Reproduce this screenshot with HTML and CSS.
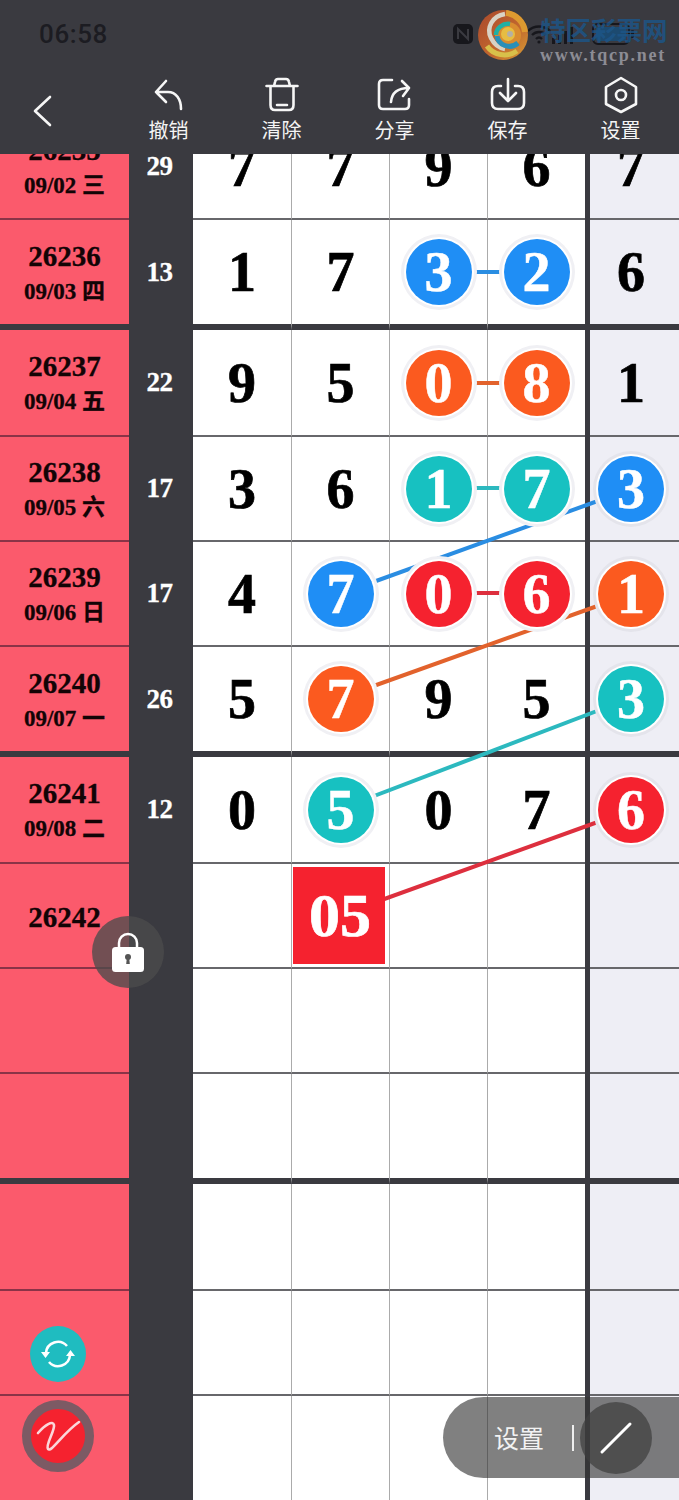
FILE: index.html
```html
<!DOCTYPE html>
<html lang="zh">
<head>
<meta charset="utf-8">
<title>走势图</title>
<link rel="stylesheet" href="styles.css">
</head>
<body>
<div class="app">
  <header class="head">
    <div class="status">
      <span class="time">06:58</span>
      <div class="status-icons">
        <svg class="si-nfc" viewBox="0 0 20 20"><rect x="0" y="0" width="20" height="20" rx="5" fill="#17171c"/><path d="M5 15V5l10 10V5" fill="none" stroke="#3a3a40" stroke-width="2"/></svg>
        <svg class="si-wifi" viewBox="0 0 24 20"><g fill="none" stroke="#17171c" stroke-width="2.4"><path d="M1 7c6-6 16-6 22 0"/><path d="M5 11c4-4 10-4 14 0"/><path d="M9 15c2-2 4-2 6 0"/></g><circle cx="12" cy="18" r="1.6" fill="#17171c"/></svg>
        <svg class="si-signal" viewBox="0 0 26 20"><g fill="#17171c"><rect x="0" y="14" width="3" height="6"/><rect x="6" y="11" width="3" height="9"/><rect x="12" y="7" width="3" height="13"/><rect x="18" y="3" width="3" height="17"/></g></svg>
        <svg class="si-batt" viewBox="0 0 42 22"><rect x="1" y="1" width="36" height="20" rx="5" fill="none" stroke="#17171c" stroke-width="2"/><rect x="4" y="4" width="30" height="14" rx="2" fill="#1c4a70"/><rect x="39" y="7" width="3" height="8" rx="1" fill="#17171c"/></svg>
      </div>
    </div>
    <nav class="toolbar">
      <a class="back"><svg class="ico" viewBox="0 0 30 40"><path d="M22 6L7 20l15 14"/></svg></a>
      <a class="tool"><svg class="ico" viewBox="0 0 40 40"><path d="M17 7L7 18l10 10M7 18h12c8 0 13 7 13 17"/></svg><span>撤销</span></a>
      <a class="tool"><svg class="ico" viewBox="0 0 40 40"><path d="M4.500 12h31M12 12l1-4q.5-3 3-3h8q2.500 0 3 3l1 4M8.500 12v19q0 5 4.500 5h14q4.500 0 4.500-5V12M15 31h10"/></svg><span>清除</span></a>
      <a class="tool"><svg class="ico" viewBox="0 0 40 40"><path d="M17 6H8q-4 0-4 4v21q0 4 4 4h22q4 0 4-4v-6M16 28q1-14 18-14M27 7l7 7-6 8"/></svg><span>分享</span></a>
      <a class="tool"><svg class="ico" viewBox="0 0 40 40"><path d="M13 12h-3q-6 0-6 6v11q0 6 6 6h20q6 0 6-6V18q0-6-6-6h-3M20 5v21M12 19l8 8 8-8"/></svg><span>保存</span></a>
      <a class="tool"><svg class="ico" viewBox="0 0 40 40"><path d="M20 4l15 9v17l-15 8-15-8V13z"/><circle cx="20" cy="21" r="5"/></svg><span>设置</span></a>
    </nav>
  </header>

  <main class="viewport">
    <svg class="links" viewBox="0 0 679 1346">
      <g stroke-width="4" fill="none">
        <path class="lk-blue" d="M437 118H536"/>
        <path class="lk-orange" d="M437 229H536"/>
        <path class="lk-teal" d="M437 334H536"/>
        <path class="lk-red" d="M437 439H536"/>
        <path class="lk-blue" d="M340 440L631 335"/>
        <path class="lk-orange" d="M340 544L631 440"/>
        <path class="lk-teal" d="M340 655L631 544"/>
        <path class="lk-red" d="M340 761L631 656"/>
      </g>
    </svg>
    <div class="board">
      <div class="row">
        <div class="id"><b>26235</b><i>09/02 三</i></div><div class="sum">29</div>
        <div class="c">7</div><div class="c">7</div><div class="c">9</div><div class="c e">6</div><div class="bar"></div><div class="x">7</div>
      </div>
      <div class="row thick">
        <div class="id"><b>26236</b><i>09/03 四</i></div><div class="sum">13</div>
        <div class="c">1</div><div class="c">7</div><div class="c"><span class="ball blue">3</span></div><div class="c e"><span class="ball blue">2</span></div><div class="bar"></div><div class="x">6</div>
      </div>
      <div class="row lead">
        <div class="id"><b>26237</b><i>09/04 五</i></div><div class="sum">22</div>
        <div class="c">9</div><div class="c">5</div><div class="c"><span class="ball orange">0</span></div><div class="c e"><span class="ball orange">8</span></div><div class="bar"></div><div class="x">1</div>
      </div>
      <div class="row">
        <div class="id"><b>26238</b><i>09/05 六</i></div><div class="sum">17</div>
        <div class="c">3</div><div class="c">6</div><div class="c"><span class="ball teal">1</span></div><div class="c e"><span class="ball teal">7</span></div><div class="bar"></div><div class="x"><span class="ball blue">3</span></div>
      </div>
      <div class="row">
        <div class="id"><b>26239</b><i>09/06 日</i></div><div class="sum">17</div>
        <div class="c">4</div><div class="c"><span class="ball blue">7</span></div><div class="c"><span class="ball red">0</span></div><div class="c e"><span class="ball red">6</span></div><div class="bar"></div><div class="x"><span class="ball orange">1</span></div>
      </div>
      <div class="row thick">
        <div class="id"><b>26240</b><i>09/07 一</i></div><div class="sum">26</div>
        <div class="c">5</div><div class="c"><span class="ball orange">7</span></div><div class="c">9</div><div class="c e">5</div><div class="bar"></div><div class="x"><span class="ball teal">3</span></div>
      </div>
      <div class="row lead">
        <div class="id"><b>26241</b><i>09/08 二</i></div><div class="sum">12</div>
        <div class="c">0</div><div class="c"><span class="ball teal">5</span></div><div class="c">0</div><div class="c e">7</div><div class="bar"></div><div class="x"><span class="ball red">6</span></div>
      </div>
      <div class="row">
        <div class="id"><b>26242</b></div><div class="sum"></div>
        <div class="c"></div><div class="c"><span class="pick">05</span></div><div class="c"></div><div class="c e"></div><div class="bar"></div><div class="x"></div>
      </div>
      <div class="row"><div class="id"></div><div class="sum"></div><div class="c"></div><div class="c"></div><div class="c"></div><div class="c e"></div><div class="bar"></div><div class="x"></div></div>
      <div class="row thick"><div class="id"></div><div class="sum"></div><div class="c"></div><div class="c"></div><div class="c"></div><div class="c e"></div><div class="bar"></div><div class="x"></div></div>
      <div class="row lead"><div class="id"></div><div class="sum"></div><div class="c"></div><div class="c"></div><div class="c"></div><div class="c e"></div><div class="bar"></div><div class="x"></div></div>
      <div class="row"><div class="id"></div><div class="sum"></div><div class="c"></div><div class="c"></div><div class="c"></div><div class="c e"></div><div class="bar"></div><div class="x"></div></div>
      <div class="row last"><div class="id"></div><div class="sum"></div><div class="c"></div><div class="c"></div><div class="c"></div><div class="c e"></div><div class="bar"></div><div class="x"></div></div>
    </div>
  </main>

  <div class="watermark">
    <svg class="wm-logo" viewBox="0 0 50 50">
      <defs><linearGradient id="wmbase" x1="0" y1="0" x2="1" y2="1"><stop offset="0" stop-color="#a9482c"/><stop offset=".6" stop-color="#c2682e"/><stop offset="1" stop-color="#d9a035"/></linearGradient></defs>
      <circle cx="25" cy="25" r="25" fill="url(#wmbase)"/>
      <path d="M9 36c6 9 20 12 30 5" fill="none" stroke="#d8c04a" stroke-width="5"/>
      <path d="M27 4C14 6 8 18 13 28c3 6 8 10 14 11" fill="none" stroke="#d9d2c4" stroke-width="4.500"/>
      <path d="M28 3c10 1 18 9 19 19" fill="none" stroke="#dd9a30" stroke-width="6"/>
      <circle cx="30" cy="25" r="13" fill="#d98c30"/>
      <path d="M19 26c1 9 13 14 21 7" fill="none" stroke="#2a8fb8" stroke-width="5"/>
      <path d="M18 25c0-7 7-12 14-11" fill="none" stroke="#1fb0a4" stroke-width="4.500"/>
      <circle cx="30" cy="24" r="7" fill="#e6bd42"/>
      <circle cx="32" cy="24" r="3" fill="#b4b0a4"/>
    </svg>
    <div class="wm-text">
      <span class="wm-cn">特区彩票网</span>
      <span class="wm-en">www.tqcp.net</span>
    </div>
  </div>

  <button class="lock">
    <svg viewBox="0 0 36 44"><path d="M9 18v-6a9 9 0 0 1 18 0v6" fill="none" stroke="#fff" stroke-width="2.500"/><rect x="2" y="16" width="32" height="25" rx="3.500" fill="#fff"/><circle cx="18" cy="26" r="3" fill="#555"/><path d="M16.800 27h2.400l.6 6h-3.600z" fill="#555"/></svg>
  </button>

  <button class="refresh">
    <svg viewBox="0 0 56 56"><g fill="none" stroke="#fff" stroke-width="2.600"><path d="M16 27a12 12 0 0 1 21-7"/><path d="M40 29a12 12 0 0 1-21 7"/></g><path d="M11 26l9 0-4.500 6zM45 30l-9 0 4.500-6z" fill="#fff"/></svg>
  </button>

  <button class="pen">
    <svg viewBox="0 0 54 54"><path d="M7 24C14 16 22 11 23 16 24 22 14 36 17 40 20 44 32 24 48 13" fill="none" stroke="#fbd6da" stroke-width="2.600" stroke-linecap="round"/></svg>
  </button>

  <div class="dock">
    <span class="dock-label">设置</span>
    <span class="dock-rule"></span>
    <span class="dock-btn"><svg viewBox="0 0 72 72"><path d="M22 50L50 22" stroke="#fff" stroke-width="3" stroke-linecap="round"/></svg></span>
  </div>
</div>
</body>
</html>
```

FILE: styles.css
```css
* { box-sizing: border-box; }
html, body { margin: 0; padding: 0; }
body { background: #3a3a40; font-family: "Liberation Serif", "Noto Sans CJK SC", serif; }

.app { position: relative; width: 679px; height: 1500px; overflow: hidden; }

.head { height: 154px; background: #3a3a40; display: flex; flex-direction: column; }
.status { height: 74px; display: flex; align-items: center; justify-content: space-between; padding: 0 45px 6px 39px; }
.time { font: 500 26px/1 Roboto, "Liberation Sans", sans-serif; color: #1c1c22; letter-spacing: .6px; }
.status-icons { display: flex; align-items: center; }
.si-nfc { width: 20px; height: 20px; margin-right: 54px; }
.si-wifi { width: 24px; height: 20px; margin-right: 1px; }
.si-signal { width: 26px; height: 20px; margin-right: 14px; }
.si-batt { width: 42px; height: 22px; }

.toolbar { display: flex; height: 80px; }
.back { width: 112px; padding: 17px 0 0 28px; }
.back .ico { width: 30px; height: 40px; }
.tool { width: 113px; display: flex; flex-direction: column; align-items: center; color: #f4f4f4; font: 400 20px/26px "Noto Sans CJK SC", sans-serif; }
.tool .ico { width: 40px; height: 40px; margin-bottom: 3px; }
.ico { fill: none; stroke: #f6f6f6; stroke-width: 2.6; stroke-linecap: round; stroke-linejoin: round; display: block; }

.viewport { position: relative; height: 1346px; overflow: hidden; background: #3a3a40; }
.board { margin-top: -39px; }
.links { position: absolute; left: 0; top: 0; width: 679px; height: 1346px; z-index: 1; pointer-events: none; }
.lk-blue { stroke: #2a8de2; }
.lk-orange { stroke: #e2622c; }
.lk-teal { stroke: #2cb9bf; }
.lk-red { stroke: #dd2f3e; }

.row { display: grid; grid-template-columns: 129px 64px 99px 98px 98px 97px 5px 89px; height: 105px; }
.row.thick { height: 110px; }
.row.lead { height: 107px; }
.row.last { height: 110px; }

.id, .c, .x { border-bottom: 2px solid #67676b; display: flex; align-items: center; justify-content: center; }
.thick .id, .thick .c, .thick .x { border-bottom: 6px solid #3a3a40; }

.id { background: #fb5a6c; flex-direction: column; border-bottom-color: #8a3347; color: #120406; font-weight: 700; padding-top: 3px; -webkit-text-stroke: .3px #120406; }
.id b { font-size: 29px; line-height: 35px; }
.id i { font-style: normal; font-size: 23px; line-height: 35px; }
.sum { background: #3a3a40; color: #fff; font-size: 27px; font-weight: 700; letter-spacing: -.5px; display: flex; align-items: center; justify-content: center; padding: 0 3px 2px 0; -webkit-text-stroke: .3px #fff; }
.thick .sum { padding-bottom: 6px; }
.c, .x { font-size: 56px; font-weight: 700; color: #000; background: #fff; -webkit-text-stroke: .7px #000; }
.c { border-right: 1px solid #ababab; }
.c.e { border-right: 0; }
.bar { background: #3a3a40; }
.x { background: #eeeef5; padding-right: 7px; }

.ball { position: relative; z-index: 2; width: 66px; height: 66px; border-radius: 50%; display: flex; align-items: center; justify-content: center; color: #fff; font-size: 56px; -webkit-text-stroke: .5px #fff; box-shadow: 0 0 0 2px #fff, 0 0 0 5px #f0f0f4; }
.x .ball { box-shadow: 0 0 0 2px #fff, 0 0 0 5px #e4e4eb; }
.blue { background: #1f8ef5; }
.orange { background: #fb5a1f; }
.teal { background: #17c1c1; }
.red { background: #f5222f; }

.pick { position: relative; z-index: 2; width: 92px; height: 97px; margin-right: 3px; padding-left: 2px; background: #f5222f; color: #fff; font-size: 62px; -webkit-text-stroke: .7px #fff; display: flex; align-items: center; justify-content: center; }

.watermark { position: absolute; left: 478px; top: 10px; display: flex; z-index: 5; }
.wm-logo { width: 50px; height: 50px; flex: none; }
.wm-text { display: flex; flex-direction: column; margin: 5px 0 0 12px; }
.wm-cn { font: 700 25.500px/27px "Noto Sans CJK SC", sans-serif; color: #1c5688; opacity: .82; white-space: nowrap; }
.wm-en { font: 700 18px/20px "Liberation Serif", serif; color: #8c8c94; letter-spacing: 1.750px; margin-top: 3px; white-space: nowrap; }

.lock, .refresh, .pen { position: absolute; z-index: 5; border: 0; padding: 0; border-radius: 50%; display: flex; align-items: center; justify-content: center; }
.lock { left: 92px; top: 916px; width: 72px; height: 72px; padding-top: 2px; background: rgba(75, 75, 75, .78); }
.lock svg { width: 36px; height: 44px; }
.refresh { left: 30px; top: 1326px; width: 56px; height: 56px; background: #1fbcc0; }
.refresh svg { width: 56px; height: 56px; }
.pen { left: 22px; top: 1400px; width: 72px; height: 72px; background: #f5222f; border: 9px solid #7c5a64; }
.pen svg { width: 54px; height: 54px; flex: none; }

.dock { position: absolute; z-index: 5; left: 443px; top: 1397px; width: 236px; height: 81px; border-radius: 41px 0 0 41px; background: rgba(50, 50, 50, .62); display: flex; align-items: center; padding-left: 51px; }
.dock-label { font: 400 25px/1 "Noto Sans CJK SC", sans-serif; color: #f2f2f2; width: 78px; }
.dock-rule { width: 2px; height: 26px; background: #eee; }
.dock-btn { width: 72px; height: 72px; margin-left: 6px; border-radius: 50%; background: rgba(62, 62, 62, .72); }
.dock-btn svg { display: block; width: 72px; height: 72px; }
```
